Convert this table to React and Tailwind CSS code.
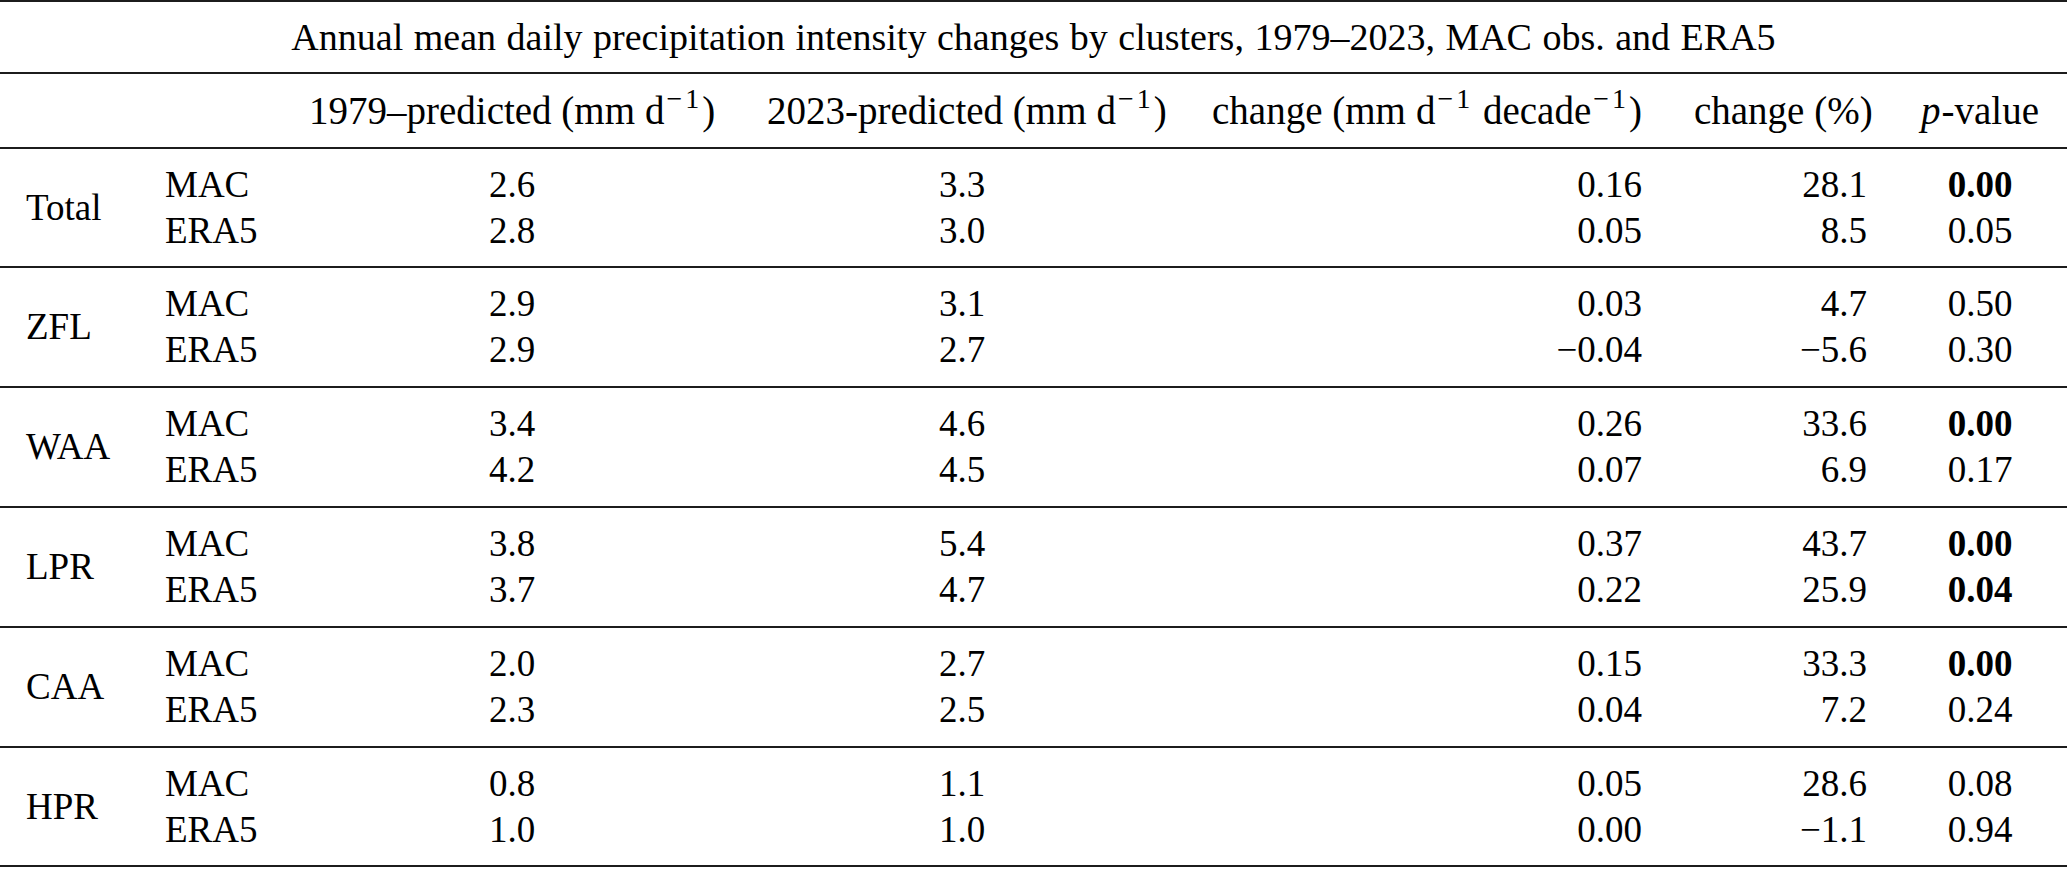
import React from "react";

// Annual mean daily precipitation intensity table (LaTeX-style booktabs look)

const groups = [
  {
    name: "Total",
    rows: [
      ["MAC", "2.6", "3.3", "0.16", "28.1", "0.00", true],
      ["ERA5", "2.8", "3.0", "0.05", "8.5", "0.05", false],
    ],
  },
  {
    name: "ZFL",
    rows: [
      ["MAC", "2.9", "3.1", "0.03", "4.7", "0.50", false],
      ["ERA5", "2.9", "2.7", "\u22120.04", "\u22125.6", "0.30", false],
    ],
  },
  {
    name: "WAA",
    rows: [
      ["MAC", "3.4", "4.6", "0.26", "33.6", "0.00", true],
      ["ERA5", "4.2", "4.5", "0.07", "6.9", "0.17", false],
    ],
  },
  {
    name: "LPR",
    rows: [
      ["MAC", "3.8", "5.4", "0.37", "43.7", "0.00", true],
      ["ERA5", "3.7", "4.7", "0.22", "25.9", "0.04", true],
    ],
  },
  {
    name: "CAA",
    rows: [
      ["MAC", "2.0", "2.7", "0.15", "33.3", "0.00", true],
      ["ERA5", "2.3", "2.5", "0.04", "7.2", "0.24", false],
    ],
  },
  {
    name: "HPR",
    rows: [
      ["MAC", "0.8", "1.1", "0.05", "28.6", "0.08", false],
      ["ERA5", "1.0", "1.0", "0.00", "\u22121.1", "0.94", false],
    ],
  },
];

const cols =
  "grid grid-cols-[139px_144px_458px_442px_485px_225px_174px] items-center";

// superscript "−1" as in mm d^{-1}
const Inv = () => (
  <sup className="text-[28px] -top-[0.55em] ml-[2px] mr-[3px]">
    <span className="mr-[3px]">{"\u2212"}</span>1
  </sup>
);

const Unit = () => (
  <>
    mm<span className="inline-block w-[10px]" />d
    <Inv />
  </>
);

const Stack = ({ items, className = "" }) => (
  <div className={`flex flex-col px-[26px] ${className}`}>
    {items.map((it, i) => (
      <div key={i}>{it}</div>
    ))}
  </div>
);

export default function App() {
  return (
    <div className="w-[2067px] bg-white text-black font-['Liberation_Serif','Times_New_Roman',serif] text-[37px] leading-[46px]">
      <div className="border-t-2 border-[#1c1c1c]" />
      <div className="h-[72px] flex items-center justify-center border-b-2 border-[#1c1c1c] text-[38px] [word-spacing:1px]">
        Annual mean daily precipitation intensity changes by clusters,
        1979–2023, MAC obs. and ERA5
      </div>
      <div
        className={`${cols} h-[75px] border-b-2 border-[#1c1c1c] text-[39px]`}
      >
        <div />
        <div />
        <div className="px-[26px] text-center whitespace-nowrap">
          1979–predicted (<Unit />)
        </div>
        <div className="px-[26px] text-center whitespace-nowrap">
          2023-predicted (<Unit />)
        </div>
        <div className="px-[26px] text-right whitespace-nowrap">
          change (<Unit /> decade
          <Inv />)
        </div>
        <div className="px-[26px] text-right whitespace-nowrap">change (%)</div>
        <div className="px-[26px] text-center whitespace-nowrap">
          <span className="italic mr-[1px]">p</span>-value
        </div>
      </div>
      {groups.map((g, gi) => (
        <div
          key={g.name}
          className={`${cols} ${
            gi === 0 || gi === groups.length - 1 ? "h-[119px]" : "h-[120px]"
          } border-b-2 border-[#1c1c1c]`}
        >
          <div className="px-[26px]">{g.name}</div>
          <Stack items={g.rows.map((r) => r[0])} />
          <Stack items={g.rows.map((r) => r[1])} className="text-center" />
          <Stack items={g.rows.map((r) => r[2])} className="text-center" />
          <Stack items={g.rows.map((r) => r[3])} className="text-right" />
          <Stack items={g.rows.map((r) => r[4])} className="text-right" />
          <Stack
            items={g.rows.map((r, i) => (
              <span key={i} className={r[6] ? "font-bold" : ""}>
                {r[5]}
              </span>
            ))}
            className="text-center"
          />
        </div>
      ))}
    </div>
  );
}
